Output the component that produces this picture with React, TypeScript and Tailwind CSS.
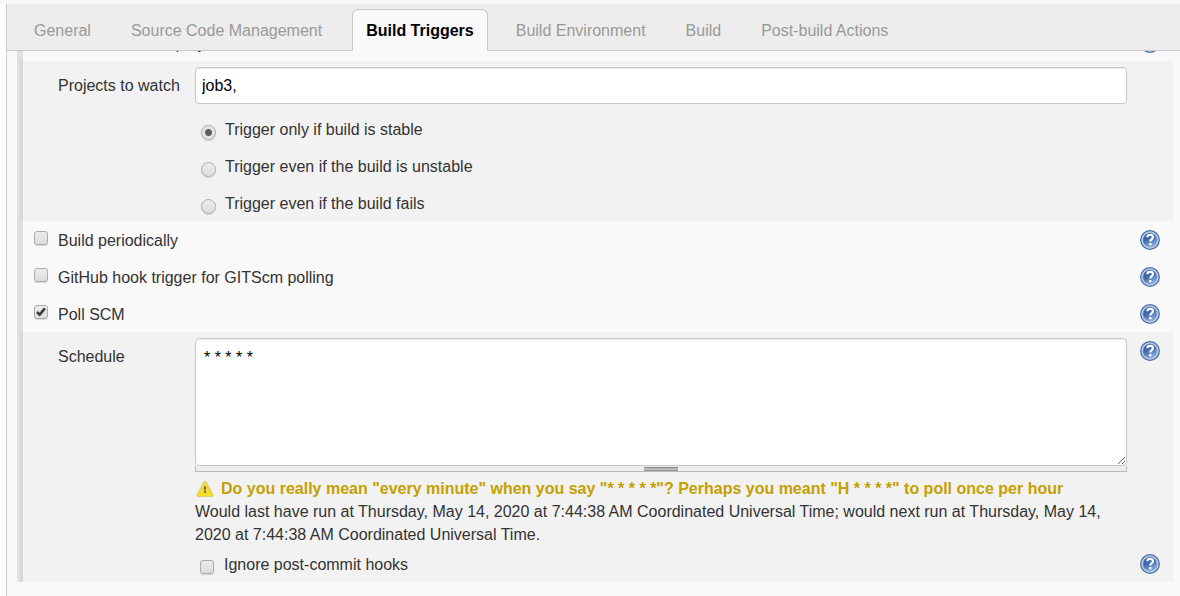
import { useId, useState } from "react";
import type { ReactNode } from "react";

const tabs = [
  "General",
  "Source Code Management",
  "Build Triggers",
  "Build Environment",
  "Build",
  "Post-build Actions",
];

function HelpButton({ topic }: { topic: string }) {
  const id = useId();
  return (
    <button type="button" aria-label={`Help for ${topic}`} className="block size-5 shrink-0 cursor-pointer">
      <svg viewBox="0 0 20 20" className="size-5" aria-hidden="true">
        <defs>
          <linearGradient id={id} x1="0" y1="0" x2="0.5" y2="1">
            <stop offset="0" stopColor="#2b569c" />
            <stop offset="0.5" stopColor="#3f69ad" />
            <stop offset="1" stopColor="#86a9d6" />
          </linearGradient>
        </defs>
        <circle cx="10" cy="10" r="9.3" fill="#c6d5e9" stroke="#4a70a9" strokeWidth="1.3" />
        <circle cx="10" cy="10" r="7.2" fill={`url(#${id})`} stroke="#8fabd2" strokeWidth="0.7" />
        <path
          d="M7.3 7.2C7.4 5.5 8.5 4.8 10.1 4.8C11.9 4.8 13 5.6 13 7.1C13 9.2 10.3 9.2 10.3 11.6"
          fill="none"
          stroke="#fff"
          strokeWidth="2.2"
        />
        <rect x="9.1" y="13" width="2.4" height="2.3" fill="#fff" />
      </svg>
    </button>
  );
}

function CheckBox({ id, defaultChecked = false }: { id: string; defaultChecked?: boolean }) {
  return (
    <span className="grid size-3.5 shrink-0">
      <input
        id={id}
        type="checkbox"
        defaultChecked={defaultChecked}
        className="peer col-start-1 row-start-1 size-3.5 appearance-none rounded-[3px] border border-[#acacac] bg-linear-to-b from-[#ededed] to-[#dcdcdc] shadow-[0_1px_1px_rgba(0,0,0,0.15)]"
      />
      <svg
        viewBox="0 0 14 14"
        aria-hidden="true"
        className="pointer-events-none invisible col-start-1 row-start-1 size-3.5 peer-checked:visible"
      >
        <path d="M3 7L5.7 9.6L10.9 3.4" fill="none" stroke="#3c3c3c" strokeWidth="2.6" />
      </svg>
    </span>
  );
}

function TriggerRow({ id, label, checked }: { id: string; label: string; checked?: boolean }) {
  return (
    <div className="flex h-[37px] shrink-0 items-center justify-between pr-5 pl-[11px]">
      <div className="flex items-center gap-2.5">
        <span className="pb-1">
          <CheckBox id={id} defaultChecked={checked} />
        </span>
        <label htmlFor={id} className="pt-0.5">
          {label}
        </label>
      </div>
      <HelpButton topic={label} />
    </div>
  );
}

function Panel({ children }: { children: ReactNode }) {
  return (
    <div className="-ml-[3px] mr-[7px] border-l-[3px] border-[#d8d8d8] bg-[#f2f2f2] pt-1.5 pl-[35px]">
      {children}
    </div>
  );
}

function StabilityOption({ label, checked }: { label: string; checked?: boolean }) {
  return (
    <label className="flex h-[37px] items-center gap-[9px]">
      <span className="pt-1.5">
        <input
          type="radio"
          name="stability"
          defaultChecked={checked}
          className="block size-[15px] appearance-none rounded-full border border-[#acacac] bg-linear-to-b from-[#ededed] to-[#dcdcdc] shadow-[0_1px_1px_rgba(0,0,0,0.15)] checked:bg-[radial-gradient(circle,#5c5c5c_3px,#e4e4e4_4px)]"
        />
      </span>
      {label}
    </label>
  );
}

function WarningIcon() {
  const id = useId();
  return (
    <svg viewBox="0 0 18 18" className="size-[18px] shrink-0" aria-hidden="true">
      <defs>
        <linearGradient id={id} x1="0" y1="0" x2="0" y2="1">
          <stop offset="0" stopColor="#f3dc5a" />
          <stop offset="0.6" stopColor="#f0d83c" />
          <stop offset="1" stopColor="#f9e21c" />
        </linearGradient>
      </defs>
      <path
        d="M8 1.6Q9 0.4 10 1.6L17 14.6Q17.6 16.6 16 16.6H2Q0.4 16.6 1 14.6Z"
        fill={`url(#${id})`}
        stroke="#dccb6a"
        strokeWidth="0.9"
      />
      <path d="M7.9 6.4H10.1L9.7 10.4H8.3Z" fill="#6b6532" />
      <circle cx="9" cy="12" r="1" fill="#6b6532" />
    </svg>
  );
}

export default function App() {
  const [active, setActive] = useState("Build Triggers");

  return (
    <div className="flex min-h-screen flex-col bg-white font-['Liberation_Sans',Arial,sans-serif] text-base text-[#333]">
      <div className="h-1 bg-[#f8f8f5]" />
      <main className="ml-1.5 flex flex-1 flex-col border-l border-[#ccc] bg-[#f9f9f9]">
        <nav
          role="tablist"
          className="flex h-[47px] items-end border-t border-b border-t-[#e8eeee] border-b-[#c8c8c8] bg-[#ededed] pl-[7px]"
        >
          {tabs.map((tab) => (
            <button
              key={tab}
              type="button"
              role="tab"
              aria-selected={tab === active}
              onClick={() => setActive(tab)}
              className={
                tab === active
                  ? "-mb-px mr-2 ml-2.5 h-[42px] rounded-t-md border border-b-0 border-[#c8c8c8] bg-[#f9f9f9] px-[13px] font-bold text-black"
                  : "h-[39px] px-5 text-[#999]"
              }
            >
              {tab}
            </button>
          ))}
        </nav>

        <form className="ml-2.5 flex flex-col border-l-[6px] border-[#e0e0e0]">
          <div className="flex h-2.5 flex-col justify-end overflow-hidden">
            <TriggerRow id="after-projects" label="Build after other projects are built" checked />
          </div>

          <Panel>
            <div className="flex">
              <label htmlFor="projects" className="w-[137px] shrink-0 pt-[7px]">
                Projects to watch
              </label>
              <input
                id="projects"
                type="text"
                defaultValue="job3,"
                className="mr-[46px] h-[37px] min-w-0 flex-1 rounded-[4px] border border-[#c8c8c8] bg-white px-1.5 text-black shadow-[inset_0_1px_1px_rgba(0,0,0,0.075)]"
              />
            </div>
            <fieldset className="-mb-px ml-[143px] pt-[7px]">
              <StabilityOption label="Trigger only if build is stable" checked />
              <StabilityOption label="Trigger even if the build is unstable" />
              <StabilityOption label="Trigger even if the build fails" />
            </fieldset>
          </Panel>

          <TriggerRow id="periodic" label="Build periodically" />
          <TriggerRow id="github" label="GitHub hook trigger for GITScm polling" />
          <TriggerRow id="poll" label="Poll SCM" checked />

          <Panel>
            <div className="flex">
              <label htmlFor="schedule" className="w-[137px] shrink-0 pt-[7px]">
                Schedule
              </label>
              <div className="min-w-0 flex-1">
                <textarea
                  id="schedule"
                  defaultValue="* * * * *"
                  className="block h-32 w-full rounded-[4px] border border-[#c8c8c8] bg-white px-2 py-[7px] text-black shadow-[inset_0_1px_1px_rgba(0,0,0,0.075)]"
                />
                <div className="flex h-1.5 justify-center border border-t-0 border-[#b9b9b9] bg-[#ededed]">
                  <span className="mt-px h-1 w-[34px] border-t border-b border-t-[#888] border-b-[#999] bg-[#bbb]" />
                </div>
              </div>
              <div className="w-[46px] shrink-0 pt-[3px] pl-[13px]">
                <HelpButton topic="Schedule" />
              </div>
            </div>
            <div className="mr-[46px] ml-[137px] pt-[5px] leading-[23px]">
              <p className="flex items-center gap-[7px] pl-px font-bold text-[#c4a000]">
                <WarningIcon />
                Do you really mean "every minute" when you say "* * * * *"? Perhaps you meant "H * * * *" to poll
                once per hour
              </p>
              <p>
                Would last have run at Thursday, May 14, 2020 at 7:44:38 AM Coordinated Universal Time; would next
                run at Thursday, May 14, 2020 at 7:44:38 AM Coordinated Universal Time.
              </p>
            </div>
            <div className="flex h-9 items-center justify-between pr-[13px] pl-[142px]">
              <div className="flex items-center gap-2.5 pt-0.5">
                <span className="pt-1">
                  <CheckBox id="hooks" />
                </span>
                <label htmlFor="hooks">Ignore post-commit hooks</label>
              </div>
              <HelpButton topic="Ignore post-commit hooks" />
            </div>
          </Panel>
        </form>
      </main>
    </div>
  );
}
